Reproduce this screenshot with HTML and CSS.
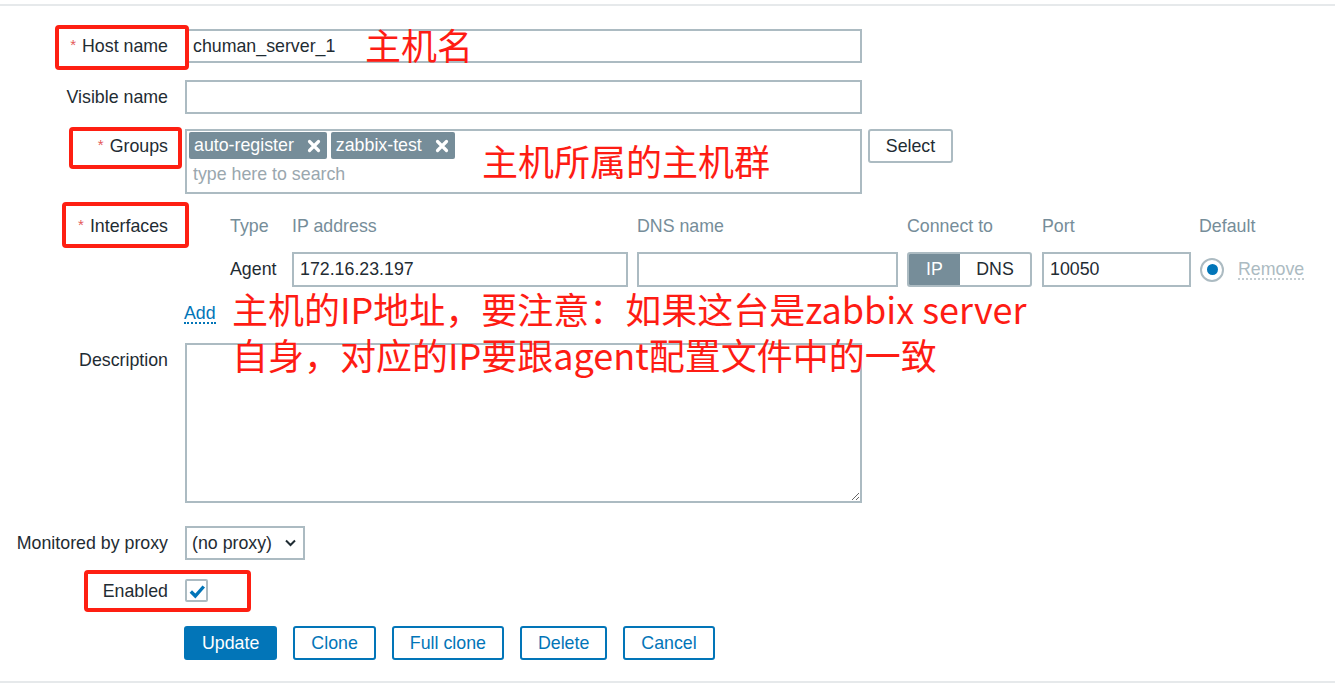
FILE: index.html
```html
<!DOCTYPE html>
<html lang="en">
<head>
<meta charset="utf-8">
<title>Host</title>
<link rel="stylesheet" href="styles.css">
</head>
<body>
<div class="page">
  <form class="form">
    <div class="row">
      <label class="lbl"><span class="req">*</span>Host name</label>
      <div class="ctl"><input class="text wide" type="text" value="chuman_server_1"></div>
    </div>
    <div class="row r-visible">
      <label class="lbl">Visible name</label>
      <div class="ctl"><input class="text wide" type="text" value=""></div>
    </div>
    <div class="row r-groups">
      <label class="lbl"><span class="req">*</span>Groups</label>
      <div class="ctl ctl-inline">
        <div class="multi">
          <div class="tags">
            <span class="tag">auto-register<svg class="x" viewBox="0 0 14 14"><path d="M2.5 2.5 11.5 11.5M11.5 2.5 2.5 11.5"/></svg></span>
            <span class="tag">zabbix-test<svg class="x" viewBox="0 0 14 14"><path d="M2.5 2.5 11.5 11.5M11.5 2.5 2.5 11.5"/></svg></span>
          </div>
          <div class="ph">type here to search</div>
        </div>
        <button type="button" class="sel-btn">Select</button>
      </div>
    </div>
    <div class="row r-iface">
      <label class="lbl lbl-iface"><span class="req">*</span>Interfaces</label>
      <div class="ctl">
        <div class="iface">
          <div class="ih">Type</div>
          <div class="ih">IP address</div>
          <div class="ih">DNS name</div>
          <div class="ih">Connect to</div>
          <div class="ih">Port</div>
          <div class="ih">Default</div>
          <div class="ic">Agent</div>
          <div class="ic"><input class="text ip" type="text" value="172.16.23.197"></div>
          <div class="ic"><input class="text dns" type="text" value=""></div>
          <div class="ic"><div class="toggle"><span class="seg on">IP</span><span class="seg">DNS</span></div></div>
          <div class="ic"><input class="text port" type="text" value="10050"></div>
          <div class="ic def"><span class="radio"><span class="dot"></span></span><span class="remove">Remove</span></div>
        </div>
        <a class="add">Add</a>
      </div>
    </div>
    <div class="row r-desc">
      <label class="lbl">Description</label>
      <div class="ctl"><textarea class="area"></textarea></div>
    </div>
    <div class="row r-proxy">
      <label class="lbl">Monitored by proxy</label>
      <div class="ctl">
        <div class="select"><span>(no proxy)</span><svg class="chev" viewBox="0 0 12 8"><path d="M1.5 1.5 6 6 10.5 1.5"/></svg></div>
      </div>
    </div>
    <div class="row r-enabled">
      <label class="lbl lbl-enabled">Enabled</label>
      <div class="ctl">
        <span class="check"><svg viewBox="0 0 16 16"><path d="M2.5 8.5 6.5 12.5 14 4"/></svg></span>
      </div>
    </div>
    <div class="row r-buttons">
      <div class="lbl"></div>
      <div class="ctl buttons">
        <button type="button" class="btn primary">Update</button>
        <button type="button" class="btn">Clone</button>
        <button type="button" class="btn">Full clone</button>
        <button type="button" class="btn">Delete</button>
        <button type="button" class="btn">Cancel</button>
      </div>
    </div>
  </form>
</div>

<div class="abox b1"></div>
<div class="abox b2"></div>
<div class="abox b3"></div>
<div class="abox b4"></div>
<div class="atext t1">主机名</div>
<div class="atext t2">主机所属的主机群</div>
<div class="atext t3">主机的IP地址，要注意：如果这台是zabbix server<br>自身，对应的IP要跟agent配置文件中的一致</div>
</body>
</html>
```
FILE: styles.css
```css
html, body {
  margin: 0;
  background: #ffffff;
}
body {
  position: relative;
  font-family: "Liberation Sans", Arial, sans-serif;
  font-size: 17.8px;
  color: #1f2c33;
}
.page {
  margin-top: 4px;
  border-top: 2px solid #e6e9eb;
  border-bottom: 2px solid #e6e9eb;
}
.form {
  display: flex;
  flex-direction: column;
  padding: 23px 0 21px 0;
}
.row {
  display: flex;
  align-items: flex-start;
  column-gap: 17px;
}
.lbl {
  width: 168px;
  flex: none;
  text-align: right;
  line-height: 34px;
  white-space: nowrap;
}
.req {
  color: #e45959;
  font-size: 15px;
  margin-right: 6px;
  position: relative;
  top: -2px;
}
.ctl {
  display: flex;
  flex-direction: column;
  align-items: flex-start;
}
.ctl-inline {
  flex-direction: row;
  gap: 6px;
}
.r-visible { margin-top: 16px; }
.r-groups { margin-top: 15px; }
.r-iface { margin-top: 20px; }
.r-desc { margin-top: 19px; }
.r-proxy { margin-top: 23px; }
.r-enabled { margin-top: 19px; }
.r-buttons { margin-top: 24px; }

.text {
  box-sizing: border-box;
  height: 34px;
  border: 2px solid #acbbc2;
  border-radius: 0;
  padding: 0 6px;
  font: inherit;
  color: #1f2c33;
  background: #fff;
  outline: none;
  margin: 0;
}
.wide { width: 677px; }

.multi {
  box-sizing: border-box;
  width: 677px;
  height: 65px;
  border: 2px solid #acbbc2;
  padding: 1px 2px;
}
.tags {
  display: flex;
  gap: 4px;
}
.tag {
  display: inline-flex;
  align-items: center;
  height: 27px;
  padding: 0 6px 0 5px;
  background: #768d99;
  color: #ffffff;
  border-radius: 2px;
}
.x {
  width: 14px;
  height: 14px;
  margin-left: 13px;
  fill: none;
  stroke: #ffffff;
  stroke-width: 3.2;
  stroke-linecap: round;
}
.ph {
  line-height: 30px;
  padding-left: 4px;
  color: #9aa7ae;
}
.sel-btn {
  box-sizing: border-box;
  height: 34px;
  width: 85px;
  border: 2px solid #acbbc2;
  border-radius: 3px;
  background: #fff;
  font: inherit;
  color: #1f2c33;
  padding: 0;
  margin: 0;
}

.lbl-iface { line-height: 24px; }
.iface {
  margin-left: 45px;
  display: grid;
  grid-template-columns: 62px 345px 270px 135px 157px auto;
  row-gap: 14px;
}
.ih {
  line-height: 24px;
  color: #768d99;
  white-space: nowrap;
}
.ic {
  height: 35px;
  display: flex;
  align-items: center;
  white-space: nowrap;
}
.ic .text { height: 35px; }
.ip { width: 336px; }
.dns { width: 261px; }
.port { width: 149px; }
.toggle {
  box-sizing: border-box;
  display: flex;
  width: 125px;
  height: 35px;
  border: 2px solid #acbbc2;
  border-radius: 3px;
  overflow: hidden;
}
.seg {
  display: flex;
  align-items: center;
  justify-content: center;
  flex: 1;
  color: #1f2c33;
}
.seg.on {
  flex: none;
  width: 51px;
  background: #768d99;
  color: #ffffff;
}
.def { gap: 14px; }
.radio {
  box-sizing: border-box;
  width: 24px;
  height: 24px;
  border: 2px solid #acbbc2;
  border-radius: 50%;
  display: flex;
  align-items: center;
  justify-content: center;
  margin-left: 1px;
}
.dot {
  width: 11px;
  height: 11px;
  border-radius: 50%;
  background: #0275b8;
}
.remove {
  color: #acbbc2;
  line-height: 18px;
  border-bottom: 2px dotted #c3cdd2;
}
.add {
  display: inline-block;
  margin-top: 17px;
  margin-left: -1px;
  line-height: 18px;
  color: #0275b8;
  border-bottom: 2px dotted #0275b8;
}

.area {
  display: block;
  box-sizing: border-box;
  width: 677px;
  height: 160px;
  border: 2px solid #acbbc2;
  border-radius: 0;
  margin: 0;
  padding: 4px 6px;
  font: inherit;
  outline: none;
}

.select {
  box-sizing: border-box;
  width: 120px;
  height: 34px;
  border: 2px solid #acbbc2;
  display: flex;
  align-items: center;
  justify-content: space-between;
  padding: 0 6px 0 5px;
}
.chev {
  width: 13px;
  height: 8px;
  fill: none;
  stroke: #1f2c33;
  stroke-width: 2;
}

.lbl-enabled { line-height: 23px; position: relative; top: 1px; }
.check {
  box-sizing: border-box;
  display: flex;
  align-items: center;
  justify-content: center;
  width: 23px;
  height: 23px;
  border: 2px solid #acbbc2;
  border-radius: 2px;
}
.check svg {
  width: 18px;
  height: 18px;
  fill: none;
  stroke: #0275b8;
  stroke-width: 3;
}

.buttons {
  flex-direction: row;
  gap: 16px;
  margin-left: -1px;
}
.btn {
  box-sizing: border-box;
  height: 34px;
  padding: 0 16px;
  border: 2px solid #0275b8;
  border-radius: 3px;
  background: #ffffff;
  color: #0275b8;
  font: inherit;
  margin: 0;
}
.btn.primary {
  background: #0275b8;
  color: #ffffff;
}

.abox {
  position: absolute;
  box-sizing: border-box;
  border: 4px solid #fe1f12;
  border-radius: 4px;
}
.b1 { left: 55px; top: 25px; width: 134px; height: 45px; }
.b2 { left: 69px; top: 127px; width: 113px; height: 42px; }
.b3 { left: 62px; top: 202px; width: 127px; height: 46px; }
.b4 { left: 84px; top: 570px; width: 167px; height: 42px; }

.atext {
  position: absolute;
  font-family: "Noto Sans CJK SC", "Liberation Sans", sans-serif;
  font-size: 36px;
  line-height: 46px;
  color: #fe1c14;
  white-space: nowrap;
}
.t1 { left: 365px; top: 21px; }
.t2 { left: 482px; top: 137px; }
.t3 { left: 232px; top: 285px; }
```
